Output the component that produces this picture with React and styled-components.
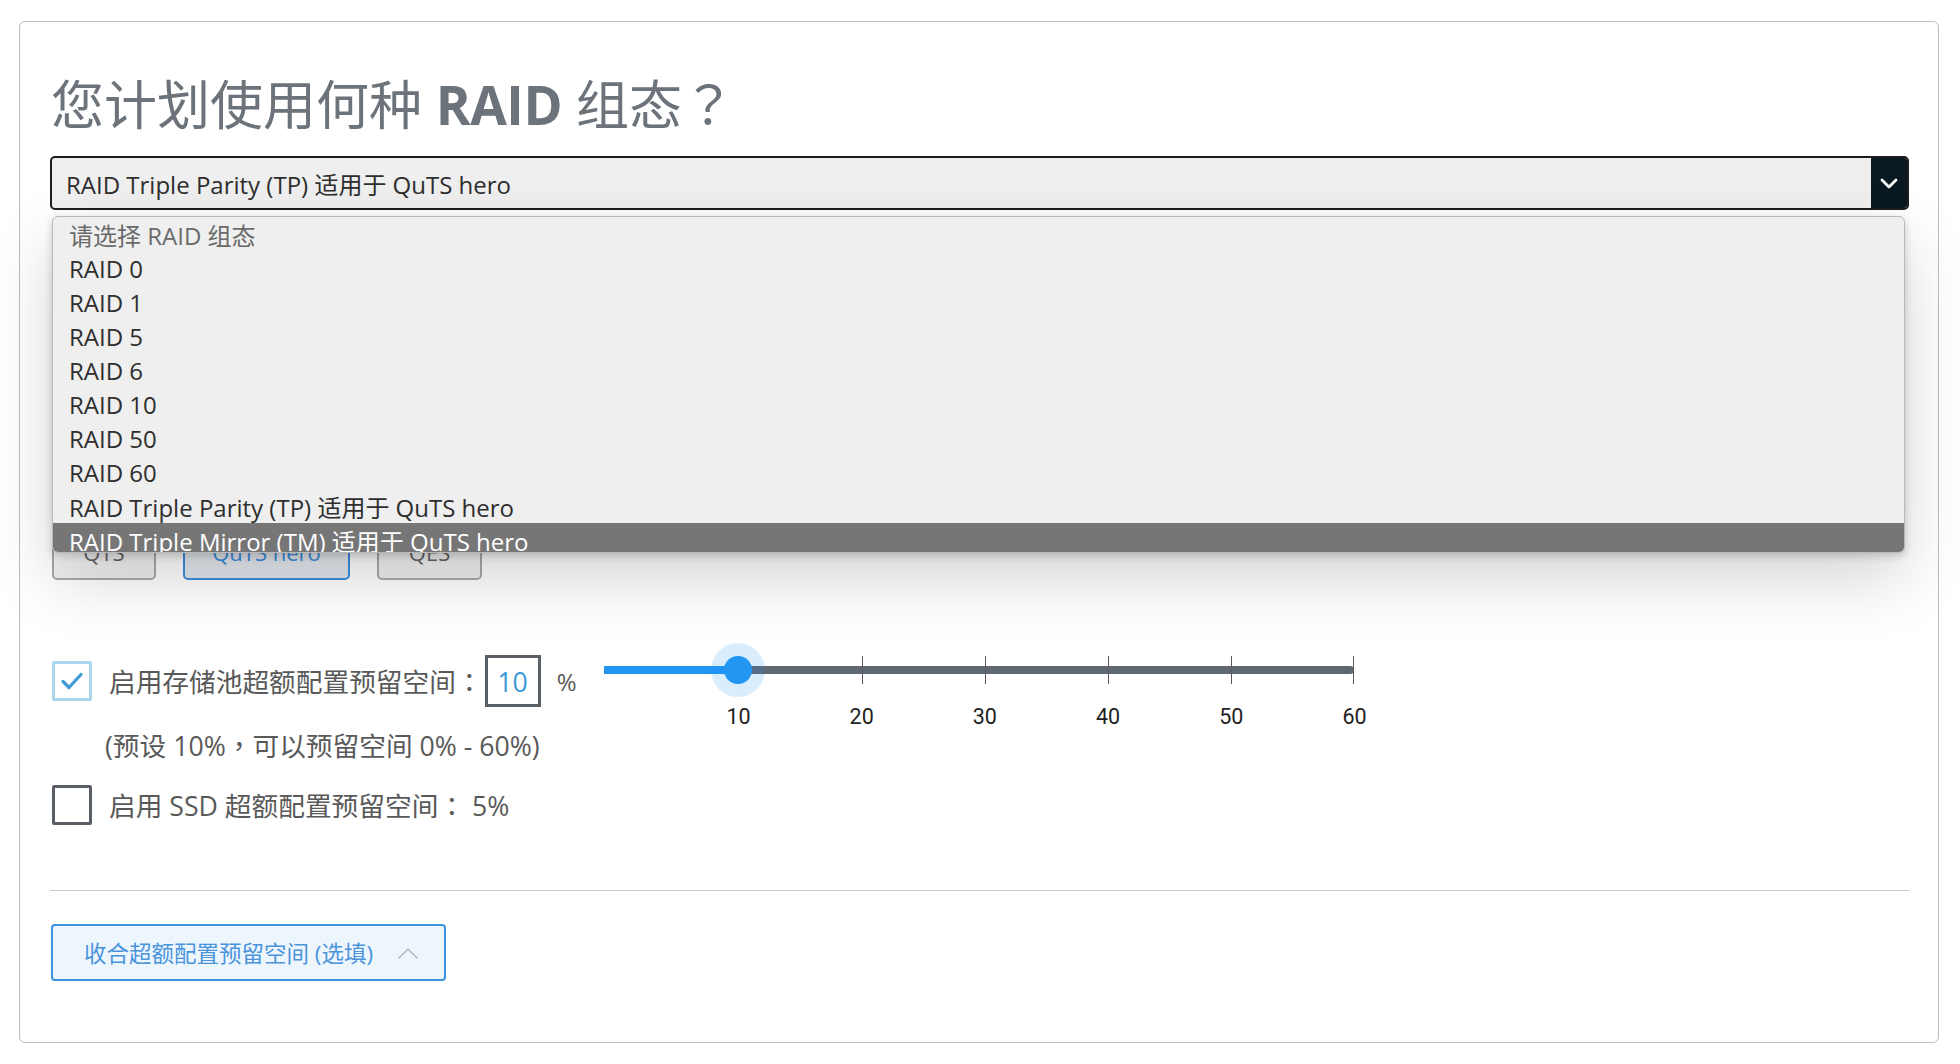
import React from "react";
import styled, { createGlobalStyle } from "styled-components";

const GlobalStyle = createGlobalStyle`
  html, body { margin: 0; padding: 0; background: #ffffff; }
  body { font-family: "Open Sans", "Noto Sans CJK SC", sans-serif; }
  * { box-sizing: border-box; }
`;

const FONT = `"Open Sans", "Noto Sans CJK SC", sans-serif`;

const Page = styled.div`
  padding: 21px 21px 21px 19px;
`;

const Card = styled.div`
  position: relative;
  width: 1920px;
  height: 1022px;
  border: 1px solid #bdbdbd;
  border-radius: 6px;
  padding: 50px 29px 0 31px;
`;

const Title = styled.h1`
  margin: 0;
  height: 60px;
  overflow: visible;
  font-family: ${FONT};
  font-size: 53px;
  line-height: 60px;
  font-weight: 400;
  color: #6c737b;
  white-space: nowrap;
  b { font-weight: 700; letter-spacing: -0.5px; }
`;

const Punct = styled.span`
  font-family: "Noto Sans CJK TC", "Noto Sans CJK SC", sans-serif;
`;

const SelectWrap = styled.div`
  position: relative;
  margin-top: 24px;
  margin-left: -1px;
  z-index: 5;
`;

const SelectBox = styled.div`
  display: flex;
  align-items: stretch;
  height: 54px;
  border: 2px solid #1c1c1c;
  border-radius: 5px;
  background: #efefef;
  overflow: hidden;
`;

const SelectValue = styled.div`
  flex: 1;
  display: flex;
  align-items: center;
  padding-left: 14px;
  font-family: ${FONT};
  font-size: 24px;
  color: #2e2e2e;
`;

const ArrowButton = styled.div`
  width: 36px;
  background: #0a1822;
  display: flex;
  align-items: center;
  justify-content: center;
`;

const Menu = styled.ul`
  position: absolute;
  top: 60px;
  left: 2px;
  right: 4px;
  height: 337px;
  margin: 0;
  padding: 0;
  list-style: none;
  background: #efefef;
  border: 1px solid #b9b9b9;
  border-radius: 6px;
  overflow: hidden;
  box-shadow: 0 26px 64px rgba(0, 0, 0, 0.17), 0 3px 8px rgba(0, 0, 0, 0.18);
`;

const MenuItem = styled.li`
  height: 34px;
  display: flex;
  align-items: center;
  padding-left: 16px;
  font-family: ${FONT};
  font-size: 24px;
  white-space: pre;
  color: ${(p) => (p.$placeholder ? "#6a6a6a" : p.$active ? "#ffffff" : "#2e2e2e")};
  background: ${(p) => (p.$active ? "#767676" : "transparent")};
`;

const OsGroup = styled.div`
  display: flex;
  gap: 27px;
  margin-top: 314px;
  margin-left: 1px;
`;

const OsButton = styled.div`
  height: 56px;
  width: ${(p) => p.$w}px;
  border: 2px solid ${(p) => (p.$active ? "#3a8ee0" : "#a9a9a9")};
  border-radius: 5px;
  background: ${(p) => (p.$active ? "linear-gradient(#f4f7fb, #dfe5ec)" : "linear-gradient(#ffffff, #eeeeee)")};
  display: flex;
  align-items: center;
  justify-content: center;
  font-family: ${FONT};
  font-size: 22px;
  color: ${(p) => (p.$active ? "#3a8ee0" : "#666")};
`;

const OptionRow = styled.div`
  display: flex;
  align-items: ${(p) => (p.$top ? "flex-start" : "center")};
  height: ${(p) => p.$h}px;
  margin-top: ${(p) => p.$mt}px;
  margin-left: 1px;
`;

const RowMain = styled.div`
  display: flex;
  align-items: center;
  height: 52px;
`;

const CheckBox = styled.div`
  width: 40px;
  height: 40px;
  flex: none;
  border: 3px solid ${(p) => (p.$checked ? "#a9d5ee" : "#5a5f66")};
  border-radius: 2px;
  display: flex;
  align-items: center;
  justify-content: center;
  background: #fff;
`;

const Label = styled.span`
  margin-left: 17px;
  font-family: ${FONT};
  font-size: 26.7px;
  line-height: 36px;
  height: 36px;
  color: #595959;
  white-space: pre;
`;

const NumberBox = styled.div`
  width: 56px;
  height: 52px;
  margin-left: 2px;
  border: 3px solid #5a5f66;
  display: flex;
  align-items: center;
  justify-content: center;
  font-family: ${FONT};
  font-size: 26.7px;
  color: #3d9ad6;
`;

const Unit = styled.span`
  margin-left: 16px;
  font-family: ${FONT};
  font-size: 24px;
  color: #595959;
`;

const SliderBlock = styled.div`
  margin-left: 28px;
  width: 750px;
  height: 52px;
  padding-top: 1px;
`;

const TrackArea = styled.div`
  position: relative;
  height: 28px;
`;

const TrackBase = styled.div`
  position: absolute;
  left: 0;
  right: 0;
  top: 10px;
  height: 8px;
  border-radius: 0 4px 4px 0;
  background: #5f6770;
`;

const TrackFill = styled.div`
  position: absolute;
  left: 0;
  top: 10px;
  height: 8px;
  background: #2196f3;
`;

const Tick = styled.div`
  position: absolute;
  top: 0;
  width: 1px;
  height: 28px;
  background: #5a5a5a;
`;

const Halo = styled.div`
  position: absolute;
  top: -13px;
  width: 54px;
  height: 54px;
  margin-left: -27px;
  border-radius: 50%;
  background: rgba(33, 150, 243, 0.17);
`;

const Thumb = styled.div`
  position: absolute;
  top: 0;
  width: 28px;
  height: 28px;
  margin-left: -14px;
  border-radius: 50%;
  background: #2196f3;
`;

const TickLabels = styled.div`
  position: relative;
  height: 26px;
  margin-top: 20px;
`;

const TickLabel = styled.span`
  position: absolute;
  top: 0;
  transform: translateX(-50%);
  font-family: Roboto, "Liberation Sans", sans-serif;
  font-size: 21.5px;
  line-height: 26px;
  color: #1f1f1f;
`;

const Hint = styled.div`
  margin-top: 20px;
  margin-left: 54px;
  height: 36px;
  font-family: ${FONT};
  font-size: 26.7px;
  line-height: 36px;
  color: #595959;
`;

const Divider = styled.hr`
  margin: 65px 0 0 -1px;
  border: none;
  border-top: 1px solid #c9c9c9;
`;

const CollapseButton = styled.button`
  margin-top: 33px;
  width: 395px;
  height: 57px;
  display: flex;
  align-items: center;
  gap: 24px;
  padding: 0 0 0 31px;
  background: #eef6fd;
  border: 2px solid #3d93e0;
  border-radius: 4px;
  font-family: ${FONT};
  font-size: 22.5px;
  color: #4a94dc;
  cursor: pointer;
`;

const options = [
  "RAID 0",
  "RAID 1",
  "RAID 5",
  "RAID 6",
  "RAID 10",
  "RAID 50",
  "RAID 60",
  "RAID Triple Parity (TP) 适用于 QuTS hero",
  "RAID Triple Mirror (TM) 适用于 QuTS hero",
];

const pos = (v) => 10.8 + (v / 60) * 739.2;

export default function App() {
  const value = 10;
  return (
    <>
      <GlobalStyle />
      <Page>
        <Card>
          <Title>
            您计划使用何种 <b>RAID</b> 组态<Punct>？</Punct>
          </Title>

          <SelectWrap>
            <SelectBox>
              <SelectValue>RAID Triple Parity (TP) 适用于 QuTS hero</SelectValue>
              <ArrowButton>
                <svg width="18" height="11" viewBox="0 0 18 11">
                  <path d="M2 2 L9 9 L16 2" fill="none" stroke="#ffffff" strokeWidth="2.8" strokeLinecap="round" strokeLinejoin="round" />
                </svg>
              </ArrowButton>
            </SelectBox>
            <Menu>
              <MenuItem $placeholder>请选择 RAID 组态</MenuItem>
              {options.map((o, i) => (
                <MenuItem key={o} $active={i === options.length - 1}>
                  {o}
                </MenuItem>
              ))}
            </Menu>
          </SelectWrap>

          <OsGroup>
            <OsButton $w={104}>QTS</OsButton>
            <OsButton $w={167} $active>
              QuTS hero
            </OsButton>
            <OsButton $w={105}>QES</OsButton>
          </OsGroup>

          <OptionRow $mt={75} $h={52} $top>
            <RowMain>
              <CheckBox $checked>
                <svg width="24" height="20" viewBox="0 0 24 20">
                  <path d="M3 10.5 L9 16.5 L21 3.5" fill="none" stroke="#3d9ad6" strokeWidth="3.2" strokeLinecap="round" strokeLinejoin="round" />
                </svg>
              </CheckBox>
              <Label>
                启用存储池超额配置预留空间<Punct>：</Punct>
              </Label>
              <NumberBox>10</NumberBox>
              <Unit>%</Unit>
            </RowMain>
            <SliderBlock>
              <TrackArea>
                <TrackBase />
                <TrackFill style={{ width: pos(value) }} />
                {[10, 20, 30, 40, 50, 60].map((t) => (
                  <Tick key={t} style={{ left: Math.min(pos(t), 749) }} />
                ))}
                <Halo style={{ left: pos(value) }} />
                <Thumb style={{ left: pos(value) }} />
              </TrackArea>
              <TickLabels>
                {[10, 20, 30, 40, 50, 60].map((t) => (
                  <TickLabel key={t} style={{ left: pos(t) }}>
                    {t}
                  </TickLabel>
                ))}
              </TickLabels>
            </SliderBlock>
          </OptionRow>

          <Hint>
            (预设 10%<Punct>，</Punct>可以预留空间 0% - 60%)
          </Hint>

          <OptionRow $mt={22} $h={40}>
            <CheckBox />
            <Label>
              启用 SSD 超额配置预留空间<Punct>：</Punct> 5%
            </Label>
          </OptionRow>

          <Divider />

          <CollapseButton>
            收合超额配置预留空间 (选填)
            <svg width="22" height="12" viewBox="0 0 22 12">
              <path d="M2 11 L11 2 L20 11" fill="none" stroke="#b5b9be" strokeWidth="1.6" strokeLinecap="round" strokeLinejoin="round" />
            </svg>
          </CollapseButton>
        </Card>
      </Page>
    </>
  );
}
